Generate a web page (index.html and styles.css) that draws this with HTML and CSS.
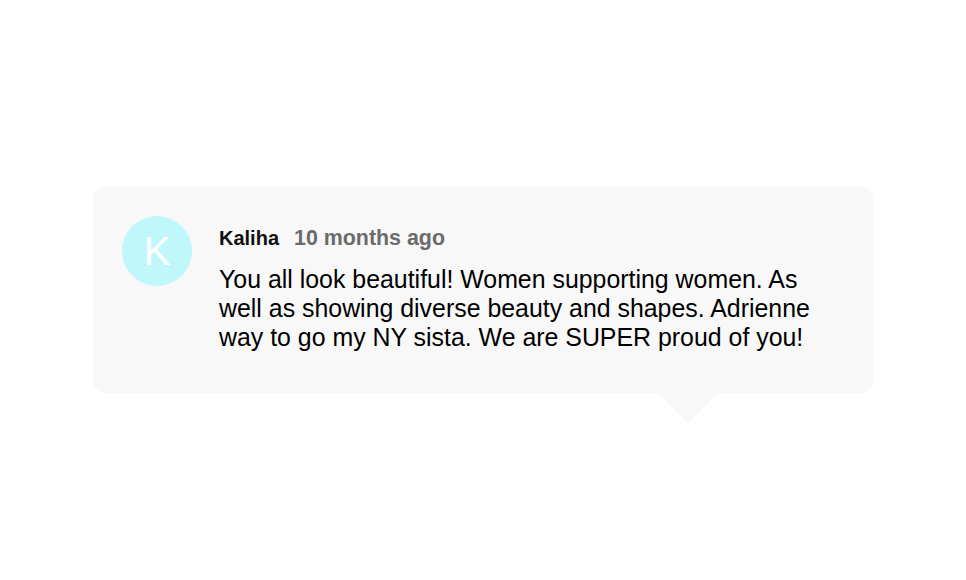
FILE: index.html
```html
<!DOCTYPE html>
<html lang="en">
<head>
    <meta charset="UTF-8">
    <title>Comment</title>
    <link rel="stylesheet" href="styles.css">
</head>
<body>
    <div class="page">
        <div class="comment">
            <div class="avatar">K</div>
            <div class="body">
                <div class="meta">
                    <span class="name">Kaliha</span>
                    <span class="time">10 months ago</span>
                </div>
                <p class="text">You all look beautiful! Women supporting women. As well as showing diverse beauty and shapes. Adrienne way to go my NY sista. We are SUPER proud of you!</p>
            </div>
        </div>
    </div>
</body>
</html>
```

FILE: styles.css
```css
body {
    margin: 0;
    padding: 0;
    background: #ffffff;
    font-family: "Liberation Sans", Arial, sans-serif;
}

.page {
    height: 580px;
    display: flex;
    align-items: center;
    justify-content: center;
}

.comment {
    position: relative;
    box-sizing: border-box;
    width: 780px;
    height: 206px;
    padding: 29px 29px;
    background: #f8f8f8;
    border-radius: 12px;
    display: flex;
    gap: 27px;
}

/* speech bubble tail */
.comment::after {
    content: "";
    position: absolute;
    left: 565px;
    top: 100%;
    border-left: 30px solid transparent;
    border-right: 30px solid transparent;
    border-top: 30px solid #f8f8f8;
}

.avatar {
    flex: none;
    width: 70px;
    height: 70px;
    border-radius: 50%;
    background: #bff7fb;
    color: #ffffff;
    font-size: 40px;
    line-height: 70px;
    text-align: center;
}

.body {
    flex: 1;
    padding-top: 10px;
}

.meta {
    display: flex;
    align-items: baseline;
    gap: 15px;
}

.name {
    font-size: 20px;
    font-weight: bold;
    color: #111111;
}

.time {
    font-size: 21.4px;
    font-weight: bold;
    color: #6b6b6b;
}

.text {
    margin: 14px 0 0 0;
    width: 610px;
    font-size: 24.9px;
    line-height: 29px;
    color: #000000;
}
```
